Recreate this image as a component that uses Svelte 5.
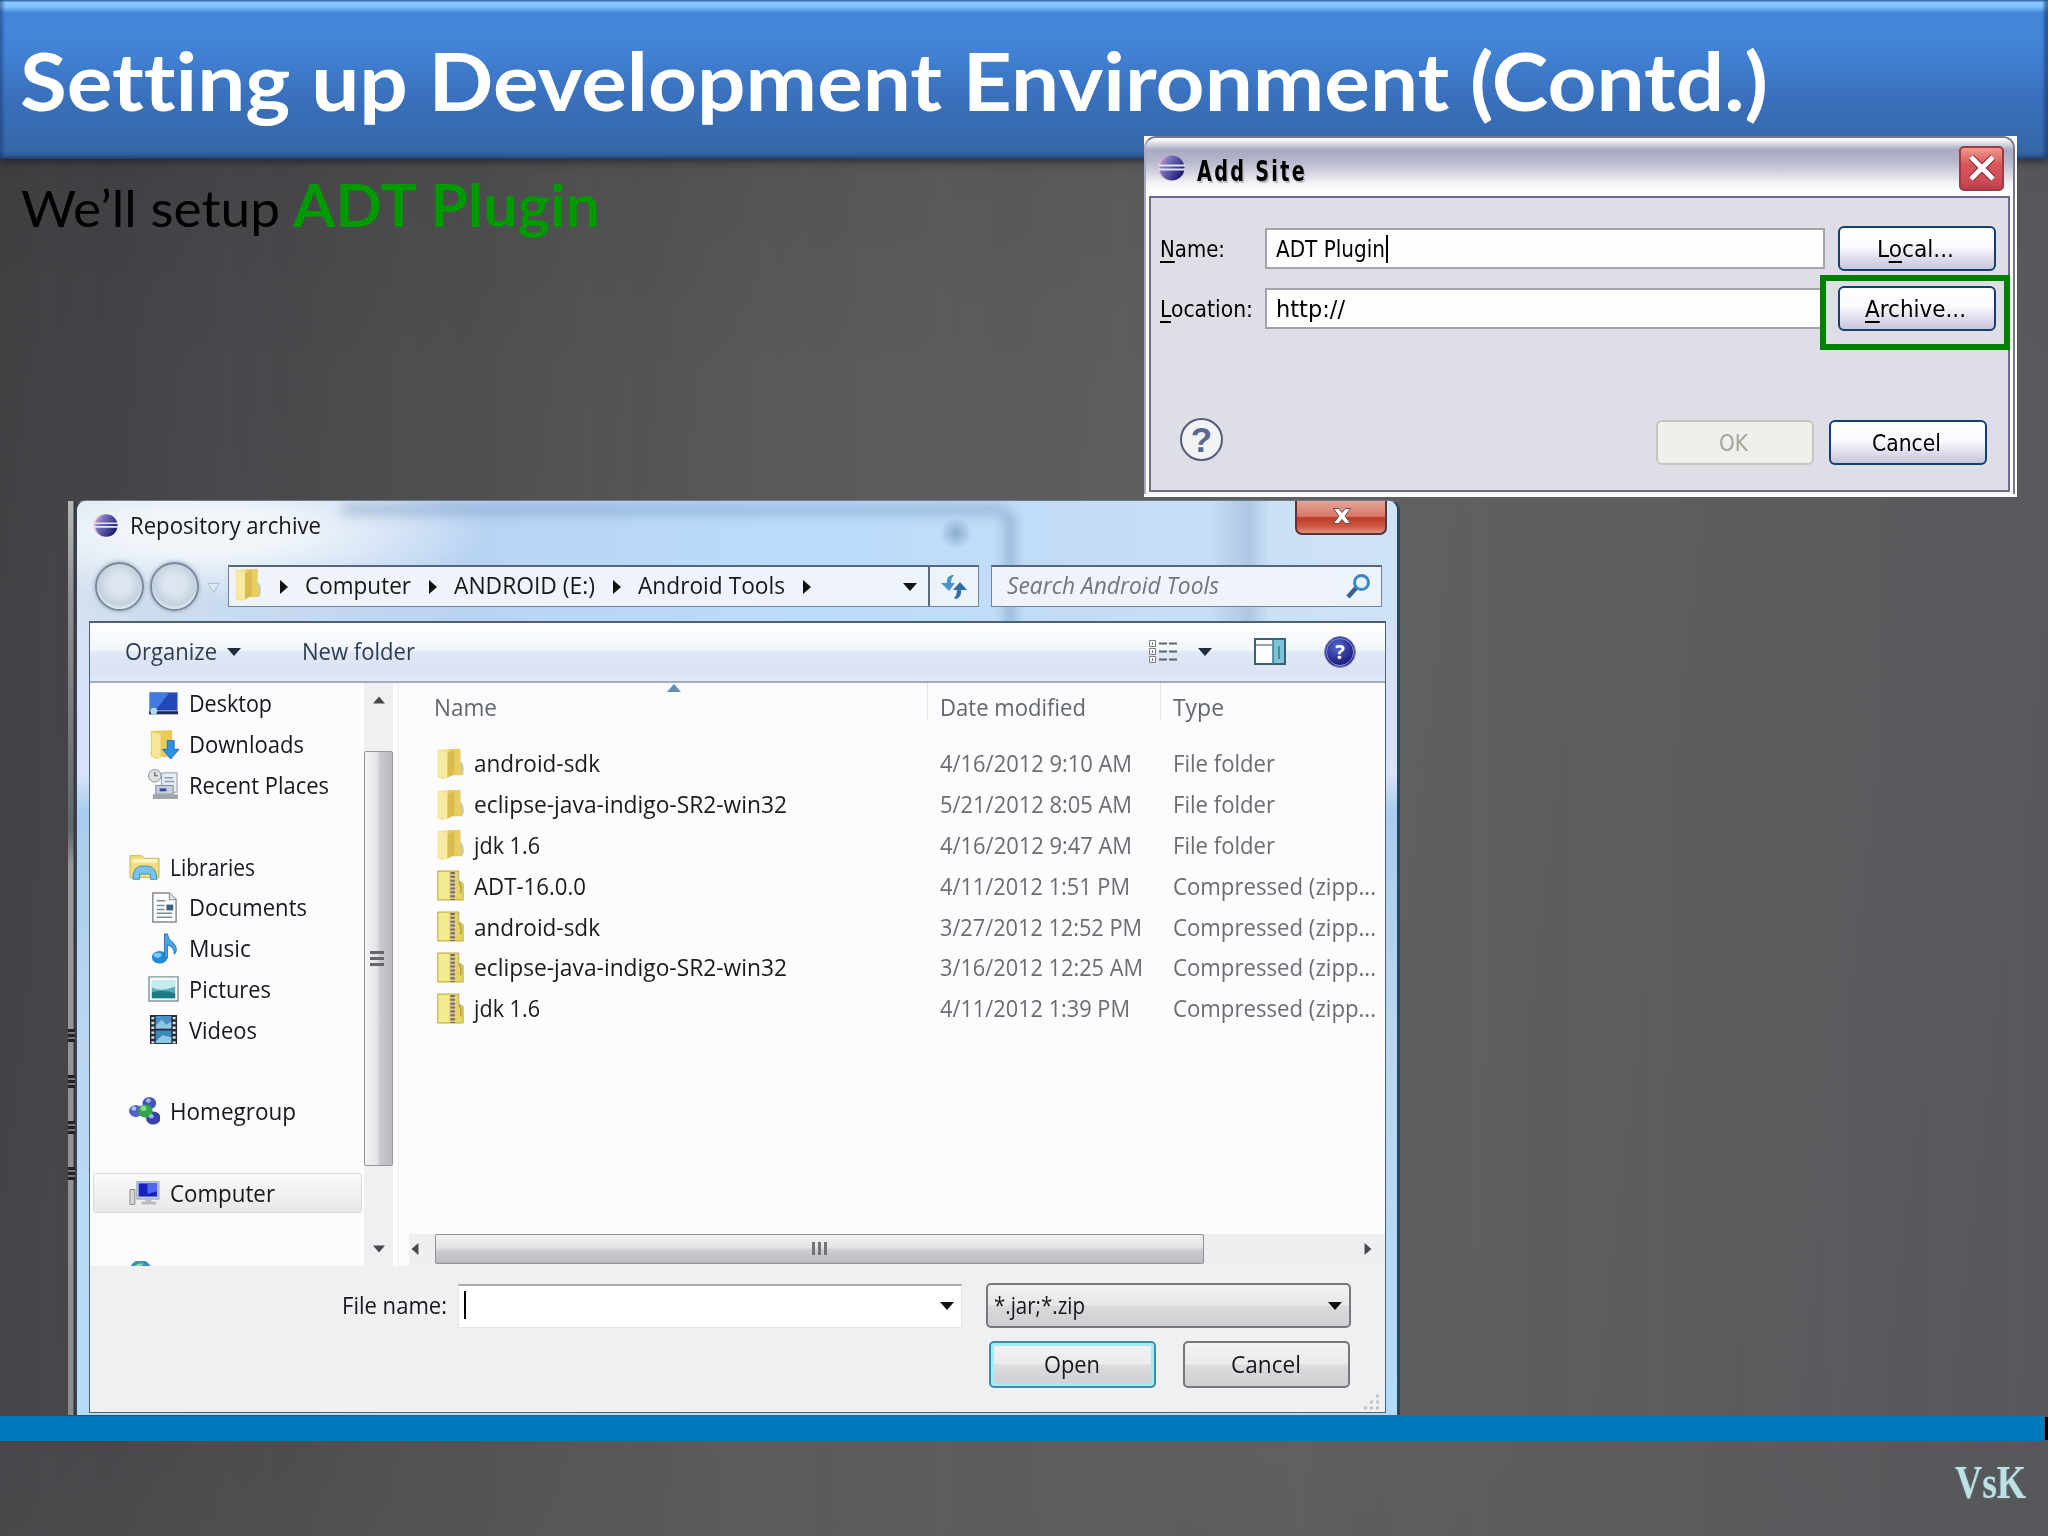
<script lang="ts">
  type Place = { icon?: string; label?: string; width?: number; root?: boolean; selected?: boolean };

  const places: Place[] = [
    { icon: 'desktop', label: 'Desktop', width: 83 },
    { icon: 'downloads', label: 'Downloads', width: 115 },
    { icon: 'recent', label: 'Recent Places', width: 140 },
    {},
    { icon: 'libraries', label: 'Libraries', width: 85, root: true },
    { icon: 'documents', label: 'Documents', width: 118 },
    { icon: 'music', label: 'Music', width: 62 },
    { icon: 'pictures', label: 'Pictures', width: 82 },
    { icon: 'videos', label: 'Videos', width: 68 },
    {},
    { icon: 'homegroup', label: 'Homegroup', width: 126, root: true },
    {},
    { icon: 'computer', label: 'Computer', width: 105, root: true, selected: true },
    {},
    { icon: 'network', root: true },
  ];

  const files = [
    { icon: 'folder', name: 'android-sdk', w: 126, date: '4/16/2012 9:10 AM', dw: 192 },
    { icon: 'folder', name: 'eclipse-java-indigo-SR2-win32', w: 313, date: '5/21/2012 8:05 AM', dw: 192 },
    { icon: 'folder', name: 'jdk 1.6', w: 66, date: '4/16/2012 9:47 AM', dw: 192 },
    { icon: 'zip', name: 'ADT-16.0.0', w: 112, date: '4/11/2012 1:51 PM', dw: 190 },
    { icon: 'zip', name: 'android-sdk', w: 126, date: '3/27/2012 12:52 PM', dw: 202 },
    { icon: 'zip', name: 'eclipse-java-indigo-SR2-win32', w: 313, date: '3/16/2012 12:25 AM', dw: 203 },
    { icon: 'zip', name: 'jdk 1.6', w: 66, date: '4/11/2012 1:39 PM', dw: 190 },
  ];

  const crumbs = [
    { label: 'Computer', width: 106 },
    { label: 'ANDROID (E:)', width: 141 },
    { label: 'Android Tools', width: 147 },
  ];

  // squeeze a label horizontally so it takes exactly `width` px
  function fit(node: HTMLElement, width: number) {
    const natural = node.getBoundingClientRect().width;
    node.style.transform = `scaleX(${width / natural})`;
    node.style.marginRight = `${width - natural}px`;
  }
</script>

{#snippet eclipse()}
  <svg class="eclipse" viewBox="0 0 28 28">
    <defs>
      <linearGradient id="ecl" x1="0" x2="1" y1="0" y2="0.6">
        <stop offset="0" stop-color="#e9a9c4" />
        <stop offset="0.35" stop-color="#7a74c0" />
        <stop offset="1" stop-color="#1d1c74" />
      </linearGradient>
    </defs>
    <circle cx="13" cy="14" r="12.5" fill="#eab3c8" opacity="0.7" />
    <circle cx="15" cy="14" r="12.5" fill="url(#ecl)" />
    <path d="M2 11.5h26M1 15.5h27" stroke="#dfe2f8" stroke-width="1.8" />
  </svg>
{/snippet}

{#snippet arrow(dir: string)}
  <svg class="arrow {dir}" viewBox="0 0 14 8"><path d="M0 0h14L7 8z" fill="currentColor" /></svg>
{/snippet}

{#snippet icon(name: string)}
  <svg class="icon" viewBox="0 0 32 32" preserveAspectRatio="none">
    {#if name === 'folder'}
      <path d="M2 2l13-1v29L7 32l-5-2z" fill="#f3e08c" />
      <path d="M14 1h14v13l2 2v12H14z" fill="#e8cd62" />
      <path d="M13 5l8-3v25l-9 4z" fill="#dbbb4e" />
      <path d="M3 2l10 3v26L3 29z" fill="#f7eaa3" />
      <path d="M28 15q4 3 2 12" stroke="#bfcbb0" stroke-width="2" fill="none" />
    {:else if name === 'zip'}
      <path d="M2 1h24v10l5 3v17H2z" fill="#e6d765" stroke="#b9a64a" />
      <path d="M3 2h12v28H3z" fill="#f4ea8e" />
      <path d="M16 2h6v28h-6z" fill="#d3c7a4" />
      <path d="M19 2v29" stroke="#7a6658" stroke-width="5" stroke-dasharray="2 2" />
      <path d="M26 12q4 5 2 12" stroke="#a99a3f" stroke-width="1.5" fill="none" />
    {:else if name === 'desktop'}
      <path d="M1 4h30v23H1z" fill="#9bacc4" />
      <path d="M2 5h28v18H2z" fill="#2148b4" />
      <path d="M2 5h20L8 23H2z" fill="#3f7be0" />
      <path d="M1 24h30v3H1z" fill="#1c2f52" />
      <circle cx="6" cy="24" r="3.5" fill="#b5d4ee" />
    {:else if name === 'downloads'}
      <path d="M3 2l22-1v28H13l-4 2-6-3z" fill="#e9c95a" />
      <path d="M4 3l9 2v26l-9-3z" fill="#f8e698" />
      <path d="M20 12h7v9h5l-8.500 10L15 21h5z" fill="#2c91e2" stroke="#1a6cb8" />
    {:else if name === 'recent'}
      <path d="M14 4h16v20H14z" fill="#e6ecf4" stroke="#8f9bab" />
      <path d="M17 9h9M17 13h10" stroke="#8f9bab" stroke-width="1.500" />
      <path d="M8 17h18v9H8z" fill="#c5cedf" stroke="#7e8998" />
      <path d="M12 20h7v3h-7z" fill="#33518f" />
      <path d="M5 26h26v5H5z" fill="#a3a5a8" />
      <circle cx="7" cy="7" r="6.500" fill="#dbe3dd" stroke="#8b969a" />
      <path d="M7 3v4h3" stroke="#536" fill="none" />
    {:else if name === 'libraries'}
      <path d="M1 3h12l3 3h15v22H1z" fill="#f1dd7c" stroke="#c9b25a" />
      <path d="M4 7h25v4H4z" fill="#fdf6c4" />
      <path d="M4 30q0-14 8-15h8q8 1 9 15h-7v-6H11v6z" fill="#79c4ec" stroke="#3687bd" />
    {:else if name === 'documents'}
      <path d="M5 1h17l7 7v23H5z" fill="#fbfcfd" stroke="#84898f" stroke-width="1.500" />
      <path d="M22 1v7h7" fill="#dde3e8" stroke="#84898f" />
      <path d="M9 9h9M9 14h8M9 18h8M9 22h16M9 26h16" stroke="#7c8a98" stroke-width="1.500" />
      <path d="M19 13h7v6h-7z" fill="#3f6078" />
    {:else if name === 'music'}
      <ellipse cx="12" cy="25" rx="8" ry="6.5" fill="#2189d6" />
      <path d="M17 26V1h3q0 5 6 9 6 7 1 12 1-7-7-10v14z" fill="#4aa3e4" stroke="#2273b5" />
      <ellipse cx="10" cy="23" rx="4" ry="2.500" fill="#7cc6f2" />
    {:else if name === 'pictures'}
      <path d="M1 4h30v25H1z" fill="#f4f8fa" stroke="#7f979f" stroke-width="1.500" />
      <path d="M4 8h24v18H4z" fill="#57aebb" />
      <path d="M4 8h24v6q-14 6-24 1z" fill="#c3ecee" />
      <path d="M4 20q12-4 24 1v5H4z" fill="#1f7a85" />
    {:else if name === 'videos'}
      <path d="M2 1h28v30H2z" fill="#222c36" />
      <path d="M8 2h16v13H8z" fill="#4b90c9" />
      <path d="M8 17h16v13H8z" fill="#3f87bb" />
      <path d="M8 12l6-6 5 5 5-3v7H8zM8 28l7-6 9 2v6H8z" fill="#8ec7e6" />
      <path d="M5 3v28M27 3v28" stroke="#d3dde4" stroke-width="3" stroke-dasharray="2.500 2.500" />
    {:else if name === 'homegroup'}
      <circle cx="21" cy="7" r="7" fill="#4356b8" />
      <circle cx="7" cy="16" r="7" fill="#5163c6" />
      <circle cx="25" cy="24" r="7.500" fill="#3844ae" />
      <circle cx="17" cy="16" r="7.500" fill="#33a644" />
      <circle cx="15" cy="13" r="3" fill="#8cdd8a" />
      <circle cx="23" cy="22" r="2.500" fill="#9fb0ee" />
      <circle cx="5" cy="13" r="2.500" fill="#b4c0f2" />
      <circle cx="20" cy="4" r="2.500" fill="#a5b3ec" />
    {:else if name === 'computer'}
      <path d="M1 12h5v17H1z" fill="#d5d8d2" stroke="#81857f" />
      <path d="M8 3h23v20H8z" fill="#bccbe0" stroke="#93a4bf" />
      <path d="M10 5h19v15H10z" fill="#1a20c0" />
      <path d="M19 5h10v9l-10 3z" fill="#4f69ea" />
      <path d="M17 23h6v3h5v3H13v-3h4z" fill="#b9bdb5" />
    {:else if name === 'network'}
      <circle cx="12" cy="10" r="11" fill="#3f8fae" />
      <path d="M4 7q6-6 11-4l-4 6z" fill="#7fd3a5" />
    {/if}
  </svg>
{/snippet}

<div class="slide">
  <header class="banner">
    <h1 use:fit={1748}>Setting up Development Environment (Contd.)</h1>
  </header>

  <p class="intro">
    <span use:fit={259}>We’ll setup</span>
    <strong use:fit={307}>ADT Plugin</strong>
  </p>

  <div class="rule"></div>
  <div class="rule-end"></div>
  <div class="signature"><span use:fit={71}>VsK</span></div>

  <!-- window peeking out behind the file chooser -->
  <div class="behind"><i></i><i></i><i></i><i></i></div>

  <section class="chooser">
    <div class="chooser-title">
      {@render eclipse()}
      <span class="caption" use:fit={191}>Repository archive</span>
      <button class="aero-close" aria-label="Close">
        <svg viewBox="0 0 20 18"><path d="M1.500 1.500h5L10 5.500l3.500-4h5L13 9l5.500 7.500h-5L10 12.500l-3.500 4h-5L7 9z" fill="#fff" stroke="#6a4a4a" /></svg>
      </button>
    </div>

    <div class="nav">
      <span class="orb"></span>
      <span class="orb"></span>
      <svg class="history" viewBox="0 0 14 12"><path d="M1 1h12L7 11z" fill="#dfe9f5" stroke="#a9b9cc" /></svg>
      <div class="address">
        <span class="address-icon">{@render icon('folder')}</span>
        {@render arrow('right')}
        {#each crumbs as crumb}
          <span class="crumb" use:fit={crumb.width}>{crumb.label}</span>
          {@render arrow('right')}
        {/each}
        <span class="address-drop">{@render arrow('down')}</span>
        <span class="refresh">
          <svg viewBox="0 0 28 26">
            <path d="M12 1Q6 2 7 9H1l8 8 6-8h-4Q11 4 14 1z" fill="#4a93c8" />
            <path d="M16 25q6-2 5-9h6l-7-8-7 8h4q0 5-3 8z" fill="#2f6ea8" />
          </svg>
        </span>
      </div>
      <div class="search">
        <em use:fit={212}>Search Android Tools</em>
        <svg viewBox="0 0 25 25">
          <path d="M2 23l8-9" stroke="#3a5f92" stroke-width="4.500" />
          <circle cx="15.500" cy="8.500" r="7" fill="#e4f2fb" stroke="#3c86c4" stroke-width="3" />
        </svg>
      </div>
    </div>

    <div class="frame">
      <div class="toolbar">
        <span class="organize" use:fit={92}>Organize</span>
        {@render arrow('down')}
        <span class="new-folder" use:fit={113}>New folder</span>
        <svg class="view" viewBox="0 0 30 26">
          <path d="M1.500 1.500h6v6h-6zM1.500 9.500h6v6h-6zM1.500 17.500h6v6h-6z" fill="#fff" stroke="#7b7f88" />
          <path d="M4 4.500h1M4 12.500h1M4 20.500h1" stroke="#445" stroke-width="2" />
          <path d="M11 4.500h18M11 12.500h18M11 20.500h18" stroke="#5d636e" stroke-width="2" stroke-dasharray="8 2" />
        </svg>
        {@render arrow('down')}
        <svg class="pane" viewBox="0 0 32 27">
          <path d="M1 1h30v25H1z" fill="#fff" stroke="#3c5f74" stroke-width="2" />
          <path d="M2 7h16" stroke="#6f8896" stroke-width="1.500" />
          <path d="M19 2h11v23H19z" fill="#7cc3da" />
          <path d="M19 1v25M25 8v13" stroke="#36788f" stroke-width="1.500" />
        </svg>
        <span class="help">?</span>
      </div>

      <div class="panes">
        <div class="places">
          {#each places as place}
            <div class="place" class:root={place.root} class:selected={place.selected}>
              {#if place.icon}{@render icon(place.icon)}{/if}
              {#if place.label}<span use:fit={place.width ?? 80}>{place.label}</span>{/if}
            </div>
          {/each}
        </div>

        <div class="vscroll">
          {@render arrow('up')}
          <div class="vthumb"><i></i><i></i><i></i></div>
          {@render arrow('down')}
        </div>

        <div class="files">
          <div class="columns">
            <span class="col-name"><b use:fit={63}>Name</b></span>
            <span class="col-date"><b use:fit={146}>Date modified</b></span>
            <span class="col-type"><b use:fit={51}>Type</b></span>
            <svg class="sorted" viewBox="0 0 14 8"><path d="M0 8l7-8 7 8z" fill="#5e8fb4" /></svg>
          </div>
          <div class="rows">
            {#each files as file}
              <div class="row">
                <span class="col-name">{@render icon(file.icon)}<b use:fit={file.w}>{file.name}</b></span>
                <span class="col-date"><b use:fit={file.dw}>{file.date}</b></span>
                <span class="col-type">
                  {#if file.icon === 'folder'}
                    <b use:fit={102}>File folder</b>
                  {:else}
                    <b use:fit={203}>Compressed (zipp...</b>
                  {/if}
                </span>
              </div>
            {/each}
          </div>
          <div class="hscroll">
            {@render arrow('left')}
            <div class="hthumb"><i></i><i></i><i></i></div>
            {@render arrow('right')}
          </div>
        </div>
      </div>

      <div class="footer">
        <div class="line">
          <span class="file-label" use:fit={105}>File name:</span>
          <div class="file-input"><span class="caret"></span>{@render arrow('down')}</div>
          <div class="filter"><span use:fit={91}>*.jar;*.zip</span>{@render arrow('down')}</div>
        </div>
        <div class="line actions">
          <button class="aero primary"><span use:fit={56}>Open</span></button>
          <button class="aero"><span use:fit={70}>Cancel</span></button>
        </div>
        <svg class="grip" viewBox="0 0 18 16"><path d="M1 14h3M7 14h3M13 14h3M7 8h3M13 8h3M13 2h3" stroke="#c3c3c8" stroke-width="3" /></svg>
      </div>
    </div>
  </section>

  <section class="site">
    <div class="site-window">
      <div class="site-title">
        {@render eclipse()}
        <span use:fit={110}>Add Site</span>
        <button class="xp-close" aria-label="Close">
          <svg viewBox="0 0 26 26"><path d="M2 2l22 22M24 2L2 24" stroke="#7c2a33" stroke-width="7" /><path d="M2 2l22 22M24 2L2 24" stroke="#fff" stroke-width="5" /></svg>
        </button>
      </div>
      <div class="site-body">
        <div class="field">
          <label for="site-name"><span use:fit={65}><u>N</u>ame:</span></label>
          <div class="text" id="site-name"><span use:fit={109}>ADT Plugin</span><i class="caret"></i></div>
          <button class="xp"><span use:fit={77}>L<u>o</u>cal...</span></button>
        </div>
        <div class="field">
          <label for="site-location"><span use:fit={93}><u>L</u>ocation:</span></label>
          <div class="text" id="site-location"><span use:fit={69}>http://</span></div>
          <button class="xp"><span use:fit={101}><u>A</u>rchive...</span></button>
        </div>
        <div class="site-actions">
          <span class="question">?</span>
          <button class="xp disabled"><span use:fit={29}>OK</span></button>
          <button class="xp"><span use:fit={69}>Cancel</span></button>
        </div>
      </div>
    </div>
    <div class="highlight"></div>
  </section>
</div>

<style>
  :global(body) {
    margin: 0;
    background: #565558;
  }

  .slide {
    position: relative;
    width: 2048px;
    height: 1536px;
    overflow: hidden;
    background:
      linear-gradient(180deg, rgba(0, 0, 0, 0.08), transparent 25%, transparent 92%, rgba(80, 90, 88, 0.2)),
      repeating-linear-gradient(90deg, transparent 0 37px, rgba(255, 255, 255, 0.008) 41px 52px, transparent 58px 91px, rgba(0, 0, 0, 0.014) 99px 133px, transparent 141px 179px),
      linear-gradient(97deg, #423f43 0%, #4c4b4e 18%, #5b5b5d 40%, #606062 65%, #5c5b5e 85%, #57565a 100%);
    font-family: 'Open Sans', 'Noto Sans', sans-serif;
  }

  span, b, em, h1, strong {
    white-space: nowrap;
  }

  h1, b, em, .intro > *, .caption, .crumb, .organize, .new-folder, .file-label,
  .place span, .filter span, .aero span, .site span, .signature span {
    display: inline-block;
    flex: none;
    transform-origin: 0 50%;
  }

  button {
    padding: 0;
    font: inherit;
    color: inherit;
    box-sizing: border-box;
    display: flex;
    align-items: center;
    justify-content: center;
  }

  /* slide text */
  .banner {
    height: 159px;
    box-sizing: border-box;
    padding: 30px 0 0 20px;
    background: linear-gradient(180deg, #3a7bcf 0, #8accff 2px, #7dbeff 7px, #4386d9 13px, #4384d8 45px, #3a71bd 95px, #3567a9 150px, #2f5c96 155px, #26466f 159px);
    box-shadow: inset 3px 0 3px rgba(24, 58, 108, 0.5), inset -4px 0 3px rgba(24, 58, 108, 0.6), 0 2px 8px rgba(20, 20, 24, 0.7);
  }

  h1 {
    margin: 0;
    font: 700 80px/100px Lato, sans-serif;
    font-variant-ligatures: none;
    color: #fff;
  }

  .intro {
    display: flex;
    align-items: baseline;
    gap: 13px;
    margin: 9px 0 0 21px;
    font: 400 51px/72px Lato, sans-serif;
    color: #000;
  }

  .intro strong {
    font-size: 60px;
    font-weight: 700;
    color: #009a00;
  }

  .rule {
    position: absolute;
    left: 0;
    top: 1416px;
    width: 2044px;
    height: 25px;
    background: #0079be;
  }

  .rule-end {
    position: absolute;
    left: 2045px;
    top: 1417px;
    width: 3px;
    height: 23px;
    background: #000008;
  }

  .signature {
    position: absolute;
    left: 1955px;
    top: 1454px;
    font: 700 47px/56px 'Liberation Serif', serif;
    color: #c0e0e4;
    text-shadow: 0 0 3px #4f7f84;
  }

  .behind {
    position: absolute;
    left: 68px;
    top: 501px;
    width: 8px;
    height: 914px;
    box-sizing: border-box;
    padding-top: 528px;
    display: flex;
    flex-direction: column;
    gap: 33px;
    background: linear-gradient(90deg, transparent 5px, #33383f 6px), linear-gradient(180deg, #b8b8b8, #8e9194 10%, #5e666c 36%, #999 40%, #8b8b8b);
  }

  .behind i {
    height: 13px;
    background: repeating-linear-gradient(180deg, #222 0 3px, #777 3px 5px);
  }

  /* shared bits */
  .icon {
    width: 31px;
    height: 31px;
    flex: none;
  }

  .arrow {
    width: 14px;
    height: 8px;
    flex: none;
    color: #111;
  }

  .arrow.right {
    transform: rotate(-90deg);
  }

  .arrow.left {
    transform: rotate(90deg);
  }

  .arrow.up {
    transform: rotate(180deg);
  }

  .eclipse {
    flex: none;
  }

  /* file chooser */
  .chooser {
    position: absolute;
    left: 75px;
    top: 500px;
    width: 1325px;
    height: 915px;
    box-sizing: border-box;
    padding: 0 11px 2px 12px;
    border-left: 2px solid #39424e;
    border-right: 3px solid #25485f;
    border-top: 1px solid #6f7c8a;
    border-radius: 10px 10px 0 0;
    display: flex;
    flex-direction: column;
    isolation: isolate;
    overflow: hidden;
    background:
      radial-gradient(ellipse 16px 16px at 879px 32px, rgba(90, 125, 165, 0.5), transparent),
      linear-gradient(90deg, transparent 1130px, rgba(110, 140, 180, 0.3) 1172px, transparent 1192px) 0 0 / 100% 122px no-repeat,
      radial-gradient(ellipse 280px 70px at 130px 30px, #f0f5fa 30%, transparent),
      linear-gradient(90deg, #d3e0ee 0, #b9d3f3 30%, #bcdcfc 55%, #c2dcf6 75%, #cfe3f7 100%) 0 0 / 100% 122px no-repeat,
      linear-gradient(180deg, #cfdff2 0, #d8e2fa 30%, #a9cdef 34%, #bcd6f0 60%, #b4dcfa 100%);
    font-size: 24px;
    line-height: 34px;
    color: #17171c;
  }

  /* blurred edge of the window that shows through the glass */
  .chooser::before {
    content: '';
    position: absolute;
    z-index: -1;
    left: 265px;
    top: 3px;
    width: 672px;
    height: 160px;
    box-sizing: border-box;
    border-top: 11px solid rgba(100, 135, 180, 0.4);
    border-right: 8px solid rgba(100, 135, 175, 0.6);
    border-top-right-radius: 20px;
    filter: blur(6px);
  }

  .chooser-title {
    display: flex;
    align-items: flex-start;
    height: 64px;
  }

  .chooser-title .eclipse {
    width: 27px;
    height: 25px;
    margin: 12px 11px 0 3px;
  }

  .caption {
    margin-top: 7px;
  }

  .aero-close {
    width: 92px;
    height: 34px;
    margin-left: auto;
    margin-right: -1px;
    border: 2px solid #5d3438;
    border-top: 0;
    border-radius: 0 0 7px 7px;
    background: linear-gradient(180deg, #e5a696 0, #d87765 48%, #bd3a28 52%, #cd5a43 80%, #e0917c 100%);
  }

  .aero-close svg {
    width: 22px;
    height: 18px;
    margin-top: -2px;
    margin-left: 2px;
  }

  .nav {
    display: flex;
    align-items: flex-start;
    height: 56px;
  }

  .orb {
    width: 49px;
    height: 49px;
    box-sizing: border-box;
    margin: -3px 0 0 6px;
    border: 2px solid #7c8a98;
    border-radius: 50%;
    background: radial-gradient(circle at 50% 45%, #dde6ee 30%, #c3d1df 62%, #e9f0f6 75%);
    box-shadow: 0 0 4px #8ea3b8;
    flex: none;
  }

  .history {
    width: 13px;
    height: 12px;
    margin: 17px 8px 0 8px;
  }

  .address,
  .search {
    display: flex;
    align-items: center;
    height: 42px;
    box-sizing: border-box;
    border: 1px solid #71839a;
    border-top: 2px solid #56677c;
    background: linear-gradient(90deg, #f1f3fa, #edf3fb);
    flex: none;
  }

  .address {
    width: 751px;
  }

  .address-icon {
    width: 27px;
    margin: 4px 16px 0 5px;
  }

  .address-icon .icon {
    width: 27px;
    height: 33px;
  }

  .crumb,
  .search em {
    margin-top: -3px;
  }

  .crumb {
    margin-left: 14px;
  }

  .crumb + :global(.arrow) {
    margin-left: 15px;
  }

  .address-drop {
    margin-left: auto;
    margin-right: 11px;
    display: flex;
  }

  .refresh {
    width: 48px;
    height: 100%;
    border-left: 2px solid #5a6b80;
    display: flex;
    align-items: center;
    justify-content: center;
  }

  .refresh svg {
    width: 28px;
    height: 26px;
  }

  .search {
    width: 391px;
    margin-left: 12px;
    padding: 0 10px 0 15px;
    justify-content: space-between;
    color: #6f7680;
  }

  .search svg {
    width: 25px;
    height: 25px;
  }

  .frame {
    flex: 1;
    display: flex;
    flex-direction: column;
    border: 1px solid #4d6173;
    border-top-width: 2px;
    background: #f0eff1;
    min-height: 0;
  }

  .toolbar {
    display: flex;
    align-items: center;
    height: 60px;
    box-sizing: border-box;
    padding-bottom: 1px;
    border-bottom: 2px solid #9fadbd;
    background: linear-gradient(180deg, #fdfeff 0, #f3f7fd 45%, #dfe6f4 52%, #dce4f4 85%, #dfeaf7 100%);
    color: #2d3d52;
  }

  .toolbar .arrow {
    color: #1f2c3e;
  }

  .organize {
    margin-left: 35px;
  }

  .organize,
  .new-folder {
    margin-top: -2px;
  }

  .organize + :global(.arrow) {
    margin-left: 10px;
    margin-right: 61px;
  }

  .view {
    width: 30px;
    height: 26px;
    margin-left: auto;
    margin-right: 20px;
  }

  .pane {
    width: 32px;
    height: 27px;
    margin: 0 38px 0 42px;
  }

  .help {
    width: 32px;
    height: 32px;
    margin-right: 29px;
    box-sizing: border-box;
    border: 3px double #8c94c4;
    border-radius: 50%;
    background: radial-gradient(circle at 40% 30%, #5867cf, #1f2386 70%);
    color: #fff;
    font: 700 20px/26px 'Open Sans', sans-serif;
    text-align: center;
  }

  .panes {
    display: flex;
    height: 583px;
    background: #fcfbfd;
    overflow: hidden;
    flex: none;
  }

  .places {
    width: 274px;
    overflow: hidden;
  }

  .place {
    display: flex;
    align-items: center;
    height: 40.8px;
    box-sizing: border-box;
    padding-left: 58px;
    gap: 10px;
  }

  .place.root {
    padding-left: 39px;
  }

  .place.root .icon {
    height: 28px;
  }

  .place.selected {
    margin: 0 2px 0 3px;
    padding-left: 35px;
    border: 1px solid #d9d9db;
    border-radius: 3px;
    background: linear-gradient(180deg, #fafafa, #e8e8ea);
  }

  .vscroll {
    width: 29px;
    box-sizing: border-box;
    padding: 13px 0 13px;
    display: flex;
    flex-direction: column;
    align-items: center;
    background: #f0eff1;
  }

  .vscroll .arrow,
  .hscroll .arrow {
    width: 12px;
    color: #48484c;
  }

  .vthumb {
    width: 29px;
    height: 415px;
    margin: 47px 0 auto;
    box-sizing: border-box;
    border: 1px solid #95959a;
    border-radius: 2px;
    background: linear-gradient(90deg, #f4f4f5, #e4e4e6 45%, #cbcbcf 55%, #b8b8bd);
    display: flex;
    flex-direction: column;
    align-items: center;
    justify-content: center;
    gap: 3px;
  }

  .vthumb i {
    width: 14px;
    height: 3px;
    margin-right: 3px;
    background: #66666c;
  }

  .files {
    flex: 1;
    margin-left: 5px;
    border-left: 1px solid #ececef;
    display: flex;
    flex-direction: column;
  }

  b {
    font-weight: 400;
  }

  .columns,
  .row {
    display: flex;
    align-items: center;
    color: #6c6c71;
    flex: none;
  }

  .columns {
    position: relative;
    height: 38px;
    color: #62676e;
  }

  .sorted {
    position: absolute;
    left: 268px;
    top: 1px;
    width: 14px;
    height: 8px;
  }

  .columns span {
    height: 38px;
    padding-top: 5px;
    line-height: 38px;
    border-right: 1px solid #e3e6ec;
    box-sizing: border-box;
  }

  .columns .col-type {
    border: 0;
  }

  .rows {
    padding-top: 22px;
    flex: 1;
  }

  .row {
    height: 40.8px;
  }

  .col-name {
    width: 529px;
    box-sizing: border-box;
    padding-left: 35px;
    flex: none;
  }

  .row .col-name {
    display: flex;
    align-items: center;
    gap: 10px;
    padding-left: 37px;
    color: #1b1b1e;
  }

  .row .icon {
    width: 28px;
    height: 31px;
  }

  .col-date {
    width: 233px;
    box-sizing: border-box;
    padding-left: 12px;
    flex: none;
  }

  .col-type {
    padding-left: 12px;
  }

  .hscroll {
    height: 32px;
    display: flex;
    align-items: center;
    background: #efeef0;
    padding: 0 11px 0 11px;
    margin-left: 10px;
  }

  .hthumb {
    width: 769px;
    height: 30px;
    margin: 0 auto 2px 14px;
    box-sizing: border-box;
    border: 1px solid #8f8f94;
    border-radius: 2px;
    background: linear-gradient(180deg, #f2f2f3, #e3e3e5 45%, #cdcdd0 55%, #bdbdc1);
    display: flex;
    align-items: center;
    justify-content: center;
    gap: 3px;
  }

  .hscroll .arrow {
    margin-bottom: 3px;
  }

  .hscroll .arrow.left {
    margin-left: -11px;
  }

  .hthumb i {
    width: 3px;
    height: 13px;
    margin-bottom: 2px;
    background: #737378;
  }

  .footer {
    position: relative;
    flex: 1;
    padding-top: 17px;
    background: #f0eff1;
  }

  .line {
    display: flex;
    align-items: center;
  }

  .line span {
    margin-top: -2px;
  }

  .file-label {
    margin-left: 252px;
  }

  .file-input {
    width: 504px;
    height: 44px;
    margin-left: 11px;
    box-sizing: border-box;
    padding: 0 7px 0 5px;
    border: 1px solid #e3e3e6;
    border-top: 2px solid #a9a9ae;
    background: #fff;
    display: flex;
    align-items: center;
    justify-content: space-between;
  }

  .caret {
    width: 2px;
    height: 28px;
    background: #000;
  }

  .filter {
    width: 365px;
    height: 45px;
    margin-left: 24px;
    box-sizing: border-box;
    padding: 0 7px 0 6px;
    border: 2px solid #77777c;
    border-radius: 5px;
    background: linear-gradient(180deg, #f1f1f1, #e8e8ea 48%, #dadadc 52%, #cecfd1);
    display: flex;
    align-items: center;
    justify-content: space-between;
  }

  .actions {
    margin-top: 13px;
    padding-left: 899px;
    gap: 27px;
  }

  .aero {
    width: 167px;
    height: 47px;
    border: 2px solid #77777c;
    border-radius: 5px;
    background: linear-gradient(180deg, #f3f3f3, #ebebec 48%, #dcdcde 52%, #cfcfd2);
  }

  .aero span {
    margin-left: -2px;
  }

  .aero.primary {
    border-color: #3c8ea6;
    box-shadow: inset 0 0 0 3px #a4e9f6;
  }

  .grip {
    position: absolute;
    right: 4px;
    bottom: 2px;
    width: 18px;
    height: 16px;
  }

  /* Add Site dialog */
  .site {
    position: absolute;
    left: 1144px;
    top: 136px;
    width: 873px;
    height: 361px;
    background: #fdfdff;
    font: 400 23px/30px 'DejaVu Sans Condensed', 'DejaVu Sans', sans-serif;
    color: #000;
  }

  .site-window {
    height: 358px;
    width: 871px;
    box-sizing: border-box;
    padding: 0 4px 0;
    border: 2px solid #77778f;
    border-left-color: #a9a9bd;
    border-bottom: 0;
    border-radius: 12px 12px 0 0;
    background: #fbfbff;
  }

  .site-title {
    display: flex;
    align-items: center;
    height: 58px;
    margin: 0 -4px;
    padding: 0 9px 0 10px;
    border-radius: 10px 10px 0 0;
    background: linear-gradient(180deg, #fff 0, #efeff6 3px, #a9a9c0 12px, #b4b4ca 22px, #d5d5e2 35px, #f3f3f8 45px, #fff 54px);
    font: 700 28px/40px 'DejaVu Sans Condensed', 'DejaVu Sans', sans-serif;
    text-shadow: 2px 2px 1px #b9b9c6;
  }

  .site-title span {
    margin-top: 9px;
    letter-spacing: 3px;
  }

  .site-title .eclipse {
    width: 28px;
    height: 28px;
    margin: 1px 12px 0 1px;
  }

  .xp-close {
    width: 45px;
    height: 45px;
    margin-left: auto;
    margin-top: 2px;
    border: 2px solid #9c3a45;
    border-radius: 5px;
    background: linear-gradient(180deg, #f09a8c, #d9565c 40%, #cf4b54 80%, #b8404c);
  }

  .xp-close svg {
    width: 26px;
    height: 26px;
  }

  .site-body {
    height: 296px;
    margin-left: -1px;
    margin-right: -1px;
    box-sizing: border-box;
    border: 2px solid #6c6c88;
    padding: 28px 12px 0 9px;
    background: #dedee7;
  }

  .field {
    display: flex;
    align-items: center;
    height: 45px;
    margin-bottom: 15px;
  }

  .field label {
    width: 105px;
    display: flex;
  }

  u {
    text-underline-offset: 4px;
    text-decoration-thickness: 2px;
  }

  .text {
    width: 561px;
    height: 41px;
    box-sizing: border-box;
    padding-left: 9px;
    border: 2px solid #a3a3ab;
    background: #fefefe;
    display: flex;
    align-items: center;
  }

  .text .caret {
    margin-left: 1px;
  }

  .xp {
    width: 158px;
    height: 45px;
    margin-left: 13px;
    border: 2px solid #123f74;
    border-radius: 6px;
    background: linear-gradient(180deg, #fff 0, #fafaff 45%, #dddcec 75%, #c8c6da 100%);
    flex: none;
  }

  .xp span {
    margin-left: -3px;
  }

  .xp.disabled {
    border-color: #c3c5bf;
    background: #eef0ea;
    color: #a3a59a;
  }

  .site-actions {
    display: flex;
    align-items: center;
    margin-top: 89px;
    padding-right: 9px;
  }

  .site-actions .xp {
    margin-left: 15px;
  }

  .site-actions .question {
    width: 43px;
    height: 43px;
    margin: -7px auto 0 20px;
    box-sizing: border-box;
    border: 2px solid #555b78;
    border-radius: 50%;
    background: #f1f3f4;
    color: #5d678f;
    font: 700 35px/39px 'Liberation Sans', sans-serif;
    text-align: center;
  }

  .highlight {
    position: absolute;
    left: 676px;
    top: 139px;
    width: 190px;
    height: 75px;
    box-sizing: border-box;
    border: 6px solid #008000;
  }
</style>
